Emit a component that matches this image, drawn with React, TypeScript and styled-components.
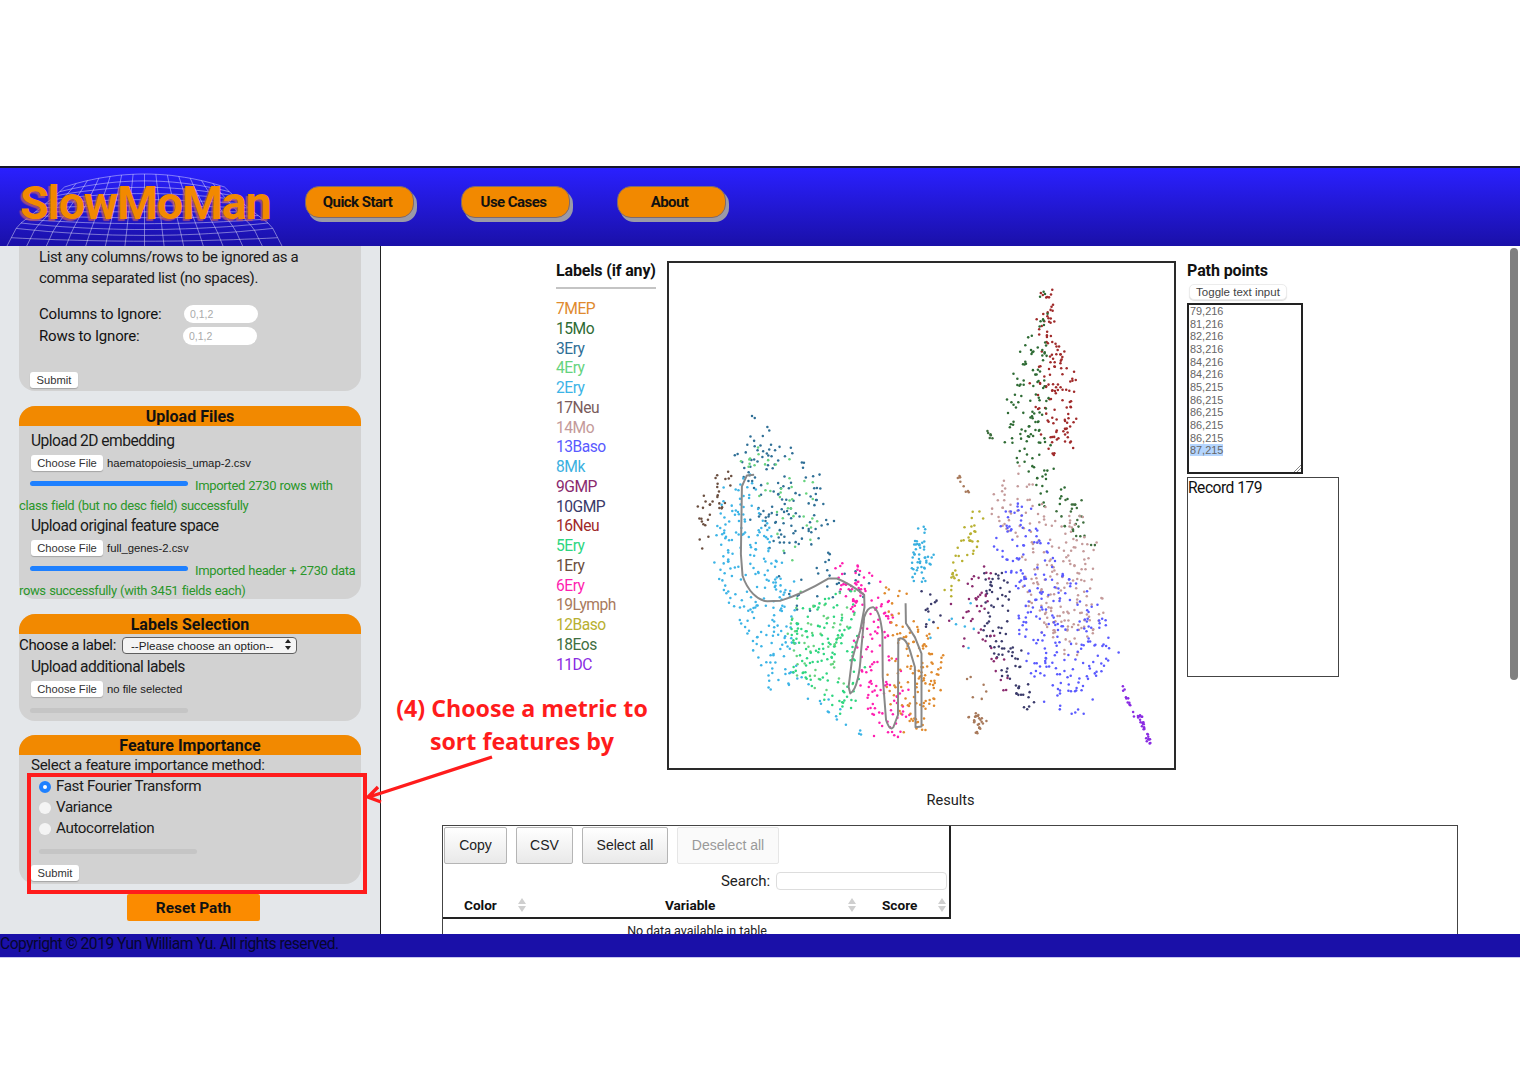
import React from "react";
import styled, { createGlobalStyle } from "styled-components";

const Global = createGlobalStyle`
  html, body { margin: 0; padding: 0; background: #fff; }
  body { font-family: Roboto, "Liberation Sans", sans-serif; color: #111; }
  * { box-sizing: border-box; }
`;

const UI = `"Liberation Sans", Arial, sans-serif`;

const Page = styled.div`
  position: relative;
  width: 1520px;
  height: 1080px;
  padding-top: 166px;
  overflow: hidden;
`;
const Frame = styled.div`
  display: flex;
  flex-direction: column;
  height: 792px;
`;
const Header = styled.header`
  flex: none;
  height: 80px;
  border-top: 2px solid #16162a;
  background: linear-gradient(#2a20ff, #1a10a8);
  display: flex;
  align-items: flex-start;
  padding: 18px 0 0 305px;
  gap: 47px;
  position: relative;
`;
const LogoGrid = styled.svg`
  position: absolute;
  left: 0;
  top: 0;
`;
const LogoText = styled.div`
  position: absolute;
  left: 20px;
  top: 7px;
  font: 700 47px/56px Roboto, sans-serif;
  letter-spacing: -1.35px;
  color: #f28900;
  text-shadow: -2px 2px 1px rgba(190, 90, 110, 0.75);
`;
const NavButton = styled.a`
  display: block;
  width: 109px;
  height: 32px;
  padding-right: 4px;
  border-radius: 14px;
  background: #f28900;
  border: 1px solid #7d6a70;
  box-shadow: 3px 4px 0 #9a9aa8;
  font: 700 15px/31px Roboto, sans-serif;
  letter-spacing: -0.55px;
  color: #111;
  text-align: center;
`;
const Body = styled.div`
  flex: 1;
  display: flex;
  min-height: 0;
`;
const Sidebar = styled.aside`
  flex: none;
  width: 381px;
  background: #e4e7ea;
  border-right: 1px solid #222;
  padding-left: 19px;
  overflow: hidden;
`;
const Card = styled.section<{ $h: number; $flat?: boolean; $mb?: number }>`
  width: 342px;
  height: ${(p) => p.$h}px;
  margin-bottom: ${(p) => p.$mb ?? 15}px;
  background: #d2d2d2;
  border-radius: ${(p) => (p.$flat ? "0 0 16px 16px" : "16px")};
`;
const CardHead = styled.h2`
  margin: 0;
  height: 20px;
  background: #f28900;
  border-radius: 16px 16px 0 0;
  font: 700 16px/21px Roboto, sans-serif;
  text-align: center;
  color: #111;
`;
const Para = styled.p`
  margin: 0;
  padding: 1px 0 0 20px;
  font-size: 15px;
  letter-spacing: -0.37px;
  line-height: 21px;
  color: #1a1a1a;
`;
const IgnoreRows = styled.div`
  margin-top: 14px;
  padding-left: 20px;
`;
const IgnoreRow = styled.div`
  display: flex;
  align-items: center;
  height: 22px;
  font-size: 15px;
  letter-spacing: -0.2px;
`;
const IgnoreLabel = styled.label<{ $w: number }>`
  width: ${(p) => p.$w}px;
`;
const Pill = styled.input`
  width: 74px;
  height: 18px;
  border: none;
  border-radius: 9px;
  background: #fff;
  padding: 0 6px;
  font: 10.5px ${UI};
  &::placeholder { color: #aaa; }
`;
const PlainButton = styled.button<{ $w: number; $mt?: number; $ml?: number }>`
  display: block;
  flex: none;
  width: ${(p) => p.$w}px;
  height: 16px;
  margin: ${(p) => p.$mt ?? 0}px 0 0 ${(p) => p.$ml ?? 0}px;
  padding: 0;
  border: none;
  border-radius: 3px;
  background: #fff;
  box-shadow: 0 1px 1px #a5a5a5;
  font: 11.2px/16px ${UI};
  color: #333;
`;
const FileHeading = styled.div<{ $pt?: number }>`
  padding: ${(p) => p.$pt ?? 0}px 0 4px 12px;
  font-size: 15.6px;
  letter-spacing: -0.52px;
  line-height: 20px;
  color: #1a1a1a;
`;
const FileRow = styled.div`
  display: flex;
  align-items: center;
  gap: 4px;
  padding-left: 12px;
  height: 16px;
  font: 11.3px ${UI};
  color: #1a1a1a;
`;
const Status = styled.p`
  margin: 5px 0 0;
  font-size: 13px;
  letter-spacing: -0.37px;
  word-spacing: 0.6px;
  line-height: 20px;
  color: #2a962a;
  white-space: nowrap;
`;
const Bar = styled.span<{ $done?: boolean; $ml: number; $block?: boolean }>`
  display: ${(p) => (p.$block ? "block" : "inline-block")};
  width: 158px;
  height: 5px;
  margin-left: ${(p) => p.$ml}px;
  margin-right: 7px;
  margin-top: ${(p) => (p.$block ? 11 : 0)}px;
  vertical-align: 4px;
  border-radius: 3px;
  background: ${(p) => (p.$done ? "#1e80ff" : "#c5c5c5")};
`;
const ChooseRow = styled.div`
  display: flex;
  align-items: center;
  height: 23px;
  padding-bottom: 2px;
  font-size: 15px;
  letter-spacing: -0.33px;
  gap: 6px;
`;
const SelectWrap = styled.div`
  position: relative;
  width: 175px;
  height: 17px;
`;
const Select = styled.select`
  appearance: none;
  width: 100%;
  height: 100%;
  padding: 0 0 0 8px;
  border: 1px solid #5f5f5f;
  border-radius: 4px;
  background: #f4f4f4;
  font: 11.6px ${UI};
  letter-spacing: 0;
  color: #222;
`;
const SelectArrows = styled.svg`
  position: absolute;
  right: 6px;
  top: 3px;
`;
const MethodLabel = styled.div`
  padding-left: 12px;
  font-size: 15.2px;
  letter-spacing: -0.35px;
  line-height: 20px;
  color: #1a1a1a;
`;
const RadioRow = styled.label`
  display: flex;
  align-items: center;
  gap: 5px;
  height: 21px;
  padding-left: 20px;
  font-size: 15.2px;
  letter-spacing: -0.4px;
  color: #1a1a1a;
`;
const RadioDot = styled.span<{ $on?: boolean }>`
  flex: none;
  width: 12px;
  height: 12px;
  margin-top: 3px;
  border-radius: 50%;
  background: ${(p) => (p.$on ? "#fff" : "#f4f4f4")};
  border: ${(p) => (p.$on ? "4px solid #1e80ff" : "none")};
`;
const ResetButton = styled.button`
  display: block;
  width: 133px;
  height: 27px;
  margin: -5px 0 0 108px;
  border: none;
  border-radius: 2px;
  background: #fb8b00;
  font: 700 15.4px/27px Roboto, sans-serif;
  color: #111;
`;
const Main = styled.main`
  flex: 1;
  position: relative;
  overflow: hidden;
  min-width: 0;
`;
const TopRow = styled.div`
  display: flex;
  align-items: flex-start;
  gap: 11px;
  padding: 15px 0 0 175px;
`;
const LabelsCol = styled.div`
  width: 100px;
  flex: none;
`;
const LabelsTitle = styled.h3`
  margin: 0;
  height: 28px;
  border-bottom: 2px solid #c4c4c4;
  font: 700 16px/20px Roboto, sans-serif;
  letter-spacing: -0.15px;
  white-space: nowrap;
  color: #111;
`;
const LabelList = styled.ul`
  list-style: none;
  margin: 10px 0 0;
  padding: 0;
`;
const LabelItem = styled.li<{ $c: string }>`
  height: 19.78px;
  font-size: 15.6px;
  letter-spacing: -0.5px;
  line-height: 20px;
  color: ${(p) => p.$c};
`;
const Plot = styled.div`
  flex: none;
  width: 509px;
  height: 509px;
  border: 2px solid #2a2a2a;
  background: #fff;
`;
const PathCol = styled.div`
  width: 155px;
  flex: none;
`;
const PathTitle = styled.h3`
  margin: 0;
  height: 23px;
  font: 700 16px/20px Roboto, sans-serif;
  letter-spacing: -0.1px;
  color: #111;
`;
const ToggleButton = styled.button`
  display: block;
  width: 98px;
  height: 16px;
  margin: 0 0 3px 2px;
  padding: 0;
  border: 1px solid #ececec;
  border-radius: 5px;
  background: #fff;
  box-shadow: 0 1px 1px #ddd;
  font: 11.5px/14px ${UI};
  color: #444;
`;
const PointsBox = styled.div`
  position: relative;
  width: 116px;
  height: 171px;
  border: 2px solid #222;
  padding: 0 1px;
  font: 10.9px/12.67px ${UI};
  color: #666;
`;
const Point = styled.div``;
const Picked = styled.span`
  background: #b4d5fe;
`;
const Grip = styled.svg`
  position: absolute;
  right: 0;
  bottom: 0;
`;
const RecordBox = styled.div`
  width: 152px;
  height: 200px;
  margin-top: 3px;
  border: 1px solid #444;
  font-size: 15.6px;
  letter-spacing: -0.5px;
  line-height: 21px;
`;
const Results = styled.div`
  margin-top: 20px;
  text-align: center;
  font-size: 14.6px;
  line-height: 20px;
  color: #222;
`;
const TableOuter = styled.div`
  width: 1016px;
  height: 120px;
  margin: 15px 0 0 61px;
  border: 1px solid #444;
`;
const TableInner = styled.div`
  position: relative;
  width: 508px;
`;
const TablePanel = styled.div`
  height: 93px;
  border-right: 2px solid #222;
  border-bottom: 2px solid #222;
`;
const Toolbar = styled.div`
  display: flex;
  padding: 1px 0 0 1px;
  height: 43px;
`;
const DtButton = styled.button<{ $w: number; $ml: number; $off?: boolean }>`
  width: ${(p) => p.$w}px;
  height: 37px;
  margin-left: ${(p) => p.$ml}px;
  padding: 0 0 1px;
  border: 1px solid ${(p) => (p.$off ? "#e6e6e6" : "#b5b5b5")};
  border-radius: 2px;
  background: ${(p) => (p.$off ? "#fafafa" : "linear-gradient(#fff,#e9e9e9)")};
  font: 14px ${UI};
  color: ${(p) => (p.$off ? "#999" : "#222")};
`;
const SearchRow = styled.div`
  display: flex;
  justify-content: flex-end;
  align-items: center;
  gap: 6px;
  height: 24px;
  padding: 0 2px 0 0;
  font-size: 15px;
  letter-spacing: -0.1px;
  color: #222;
`;
const SearchInput = styled.input`
  width: 171px;
  height: 18px;
  border: 1px solid #ddd;
  border-radius: 4px;
  background: #fff;
`;
const HeadRow = styled.div`
  display: flex;
  align-items: center;
  height: 23px;
`;
const HeadCell = styled.div<{ $w: number; $pl: number }>`
  position: relative;
  width: ${(p) => p.$w}px;
  padding-left: ${(p) => p.$pl}px;
  font-size: 13.6px;
  font-weight: 700;
  color: #111;
`;
const SortIcon = styled.svg<{ $r: number }>`
  position: absolute;
  right: ${(p) => p.$r}px;
  top: 0;
`;
const Empty = styled.div`
  width: 508px;
  text-align: center;
  font-size: 12.5px;
  line-height: 24px;
  color: #222;
`;
const Footer = styled.footer`
  flex: none;
  height: 24px;
  background: #1a10a8;
  border-bottom: 1px solid #c8c8ee;
  font-size: 15.6px;
  letter-spacing: -0.5px;
  line-height: 21px;
  color: #06062e;
  white-space: nowrap;
`;
const ScrollThumb = styled.div`
  position: absolute;
  top: 2px;
  right: 2px;
  width: 8px;
  height: 432px;
  border-radius: 4px;
  background: #808080;
`;
const RedBox = styled.div`
  position: absolute;
  left: 27px;
  top: 773px;
  width: 340px;
  height: 121px;
  border: 4px solid #ff1c1c;
  pointer-events: none;
`;
const Arrow = styled.svg`
  position: absolute;
  left: 360px;
  top: 750px;
`;
const Note = styled.div`
  position: absolute;
  left: 382px;
  top: 692px;
  width: 280px;
  text-align: center;
  font: 700 23.2px/33px "Open Sans", sans-serif;
  color: #ff1c1c;
`;

type Cluster = { c: string; n: number; poly: number[][] };
const COL: Record<string, string> = {
  "7MEP": "#e08a2e", "15Mo": "#2e6b34", "3Ery": "#2f6f96", "4Ery": "#66d37e", "2Ery": "#3cb4e6",
  "17Neu": "#7a5c5c", "14Mo": "#c49a9a", "13Baso": "#5a5aff", "8Mk": "#3ab0e0", "9GMP": "#8a2a6e",
  "10GMP": "#3a3a6a", "16Neu": "#a02a2a", "5Ery": "#2ed680", "1Ery": "#6b4f40", "6Ery": "#ff1fb0",
  "19Lymph": "#a87a5c", "12Baso": "#b8b030", "18Eos": "#3f6f3f", "11DC": "#8a2be2",
};
const CL: Cluster[] = [
  { c: COL["16Neu"], n: 10, poly: [[1150, 100], [1185, 85], [1195, 205], [1150, 205]] },
  { c: COL["16Neu"], n: 125, poly: [[1175, 90], [1190, 200], [1250, 350], [1255, 530], [1240, 590], [1160, 600], [1120, 400], [1140, 200], [1150, 110]] },
  { c: COL["15Mo"], n: 120, poly: [[1135, 120], [1160, 100], [1170, 300], [1170, 600], [1210, 640], [1130, 700], [1070, 600], [1040, 540], [1045, 380], [1090, 250]] },
  { c: COL["15Mo"], n: 12, poly: [[1100, 660], [1250, 700], [1270, 760], [1130, 760]] },
  { c: COL["18Eos"], n: 26, poly: [[1190, 750], [1275, 745], [1310, 900], [1240, 880]] },
  { c: COL["18Eos"], n: 6, poly: [[980, 528], [988, 525], [1000, 550], [992, 555]] },
  { c: COL["14Mo"], n: 215, poly: [[1030, 620], [1100, 640], [1160, 760], [1290, 790], [1340, 990], [1350, 1080], [1240, 1240], [1130, 1110], [1060, 880], [1000, 770]] },
  { c: COL["13Baso"], n: 245, poly: [[1000, 880], [1040, 750], [1100, 760], [1180, 900], [1340, 1080], [1365, 1200], [1300, 1310], [1280, 1390], [1230, 1400], [1130, 1320], [1090, 1200], [1060, 1000]] },
  { c: COL["10GMP"], n: 85, poly: [[965, 950], [1045, 950], [1060, 1150], [1120, 1340], [1090, 1390], [1030, 1290], [950, 1100]] },
  { c: COL["9GMP"], n: 42, poly: [[920, 930], [990, 930], [1000, 1150], [1060, 1290], [1040, 1390], [990, 1200], [925, 1070]] },
  { c: COL["12Baso"], n: 40, poly: [[945, 745], [965, 770], [955, 885], [905, 950], [870, 1060], [860, 1000], [880, 920], [920, 830]] },
  { c: COL["19Lymph"], n: 9, poly: [[888, 660], [900, 660], [930, 715], [915, 720]] },
  { c: COL["19Lymph"], n: 26, poly: [[960, 1370], [985, 1405], [945, 1450], [925, 1390]] },
  { c: COL["19Lymph"], n: 6, poly: [[880, 1250], [1000, 1250], [1000, 1350], [880, 1350]] },
  { c: COL["11DC"], n: 12, poly: [[1385, 1295], [1395, 1295], [1440, 1390], [1425, 1395]] },
  { c: COL["11DC"], n: 26, poly: [[1435, 1385], [1448, 1385], [1478, 1470], [1468, 1472]] },
  { c: COL["1Ery"], n: 34, poly: [[95, 795], [175, 635], [225, 665], [160, 850], [130, 905]] },
  { c: COL["3Ery"], n: 130, poly: [[270, 480], [305, 445], [340, 520], [470, 650], [525, 800], [500, 860], [380, 900], [320, 880], [280, 790], [230, 590]] },
  { c: COL["3Ery"], n: 30, poly: [[500, 895], [650, 960], [620, 1040], [400, 1080], [350, 950]] },
  { c: COL["2Ery"], n: 225, poly: [[140, 880], [190, 700], [270, 640], [330, 800], [360, 950], [420, 1000], [400, 1300], [340, 1310], [300, 1240], [200, 1040]] },
  { c: COL["4Ery"], n: 42, poly: [[210, 575], [380, 580], [480, 730], [460, 900], [350, 900], [340, 800]] },
  { c: COL["4Ery"], n: 55, poly: [[380, 1000], [600, 1000], [600, 1300], [440, 1340], [380, 1150]] },
  { c: COL["5Ery"], n: 125, poly: [[385, 1070], [590, 1010], [600, 1320], [570, 1400], [400, 1270]] },
  { c: COL["2Ery"], n: 16, poly: [[400, 1250], [600, 1420], [640, 1470], [590, 1450], [430, 1340]] },
  { c: COL["6Ery"], n: 150, poly: [[510, 930], [640, 930], [700, 1100], [745, 1400], [725, 1470], [640, 1472], [600, 1300], [590, 1100]] },
  { c: COL["7MEP"], n: 125, poly: [[700, 1100], [830, 1130], [860, 1270], [800, 1430], [720, 1450], [685, 1300]] },
  { c: COL["7MEP"], n: 10, poly: [[660, 980], [750, 980], [720, 1100], [660, 1060]] },
  { c: COL["8Mk"], n: 50, poly: [[785, 795], [800, 795], [822, 900], [800, 1000], [745, 980], [750, 890]] },
  { c: COL["10GMP"], n: 12, poly: [[780, 880], [830, 1010], [850, 1130], [790, 1120]] },
  { c: COL["2Ery"], n: 8, poly: [[780, 1040], [960, 1040], [940, 1200], [800, 1160]] },
  { c: COL["9GMP"], n: 6, poly: [[850, 1050], [950, 1050], [950, 1200], [860, 1160]] },
];

function inPoly(x: number, y: number, p: number[][]) {
  let hit = false;
  for (let i = 0, j = p.length - 1; i < p.length; j = i++) {
    const a = p[i], b = p[j];
    if (a[1] > y !== b[1] > y && x < ((b[0] - a[0]) * (y - a[1])) / (b[1] - a[1]) + a[0]) hit = !hit;
  }
  return hit;
}

function buildDots() {
  let s = 12345;
  const rnd = () => {
    s = (s * 1664525 + 1013904223) >>> 0;
    return s / 4294967296;
  };
  const jitter = (k: number) => (rnd() + rnd() + rnd() - 1.5) * k;
  const out: { x: number; y: number; c: string }[] = [];
  for (const cl of CL) {
    const xs = cl.poly.map((q) => q[0]), ys = cl.poly.map((q) => q[1]);
    const x0 = Math.min(...xs), x1 = Math.max(...xs), y0 = Math.min(...ys), y1 = Math.max(...ys);
    const k = cl.n > 20 && x1 - x0 > 100 ? 16 : 3;
    let placed = 0, guard = 0;
    while (placed < cl.n && guard < 20000) {
      guard++;
      const x = x0 + rnd() * (x1 - x0), y = y0 + rnd() * (y1 - y0);
      if (inPoly(x, y, cl.poly)) {
        out.push({ x: x + jitter(k), y: y + jitter(k), c: cl.c });
        placed++;
      }
    }
  }
  return out;
}
const DOTS = buildDots();
const PATH =
  "M280 660 L258 662 L243 695 L240 900 L245 965 C260 1010 290 1040 320 1042 L360 1040 C410 1025 460 1000 505 973 L530 973 C560 985 590 1005 612 1022 L613 1060 L600 1130 L575 1220 L565 1300 L570 1320 C590 1310 600 1250 602 1200 L612 1090 Q622 1058 640 1060 Q660 1070 667 1140 L668 1270 L678 1400 Q690 1435 700 1422 L714 1385 L715 1155 Q735 1145 750 1190 L765 1240 L767 1422 L785 1420 L785 1200 L765 1150 L738 1108 L737 1048";

function gridPaths() {
  const h: string[] = [];
  const pos = (u: number, v: number) => {
    const cx = 144.5;
    const x = cx + u * (80 + 58 * v);
    const base = 6 + 73 * Math.pow(v, 0.95);
    const c = v < 0.8 ? 13 * (1 - v / 0.5) : -8.4 * (1 - v) * 5;
    return [x, base + c * u * u];
  };
  const rows = 12, cols = 14;
  for (let r = 0; r <= rows; r++) {
    let d = "";
    for (let i = 0; i <= 24; i++) {
      const [x, y] = pos(-1 + i / 12, r / rows);
      d += `${i ? "L" : "M"}${x.toFixed(1)} ${y.toFixed(1)} `;
    }
    h.push(d);
  }
  for (let k = 0; k <= cols; k++) {
    let d = "";
    for (let i = 0; i <= 12; i++) {
      const [x, y] = pos(-1 + (2 * k) / cols, i / 12);
      d += `${i ? "L" : "M"}${x.toFixed(1)} ${y.toFixed(1)} `;
    }
    h.push(d);
  }
  return h;
}
const GRID = gridPaths();

const LABELS = ["7MEP","15Mo","3Ery","4Ery","2Ery","17Neu","14Mo","13Baso","8Mk","9GMP","10GMP","16Neu","5Ery","1Ery","6Ery","19Lymph","12Baso","18Eos","11DC"];
const POINTS = ["79,216","81,216","82,216","83,216","84,216","84,216","85,215","86,215","86,215","86,215","86,215"];

const Sort = ({ r }: { r: number }) => (
  <SortIcon $r={r} width="8" height="16" viewBox="0 0 8 16">
    <path d="M4 1 L8 7 H0Z M4 15 L8 9 H0Z" fill="#cfcfcf" />
  </SortIcon>
);

export default function App() {
  return (
    <Page>
      <Global />
      <Frame>
        <Header>
          <LogoGrid width="290" height="78" viewBox="0 0 290 78">
            {GRID.map((d, i) => (
              <path key={i} d={d} fill="none" stroke="#fff" strokeOpacity="0.42" strokeWidth="1" />
            ))}
          </LogoGrid>
          <LogoText>SlowMoMan</LogoText>
          <NavButton>Quick Start</NavButton>
          <NavButton>Use Cases</NavButton>
          <NavButton>About</NavButton>
        </Header>
        <Body>
          <Sidebar>
            <Card $h={145} $flat>
              <Para>
                List any columns/rows to be ignored as a
                <br />
                comma separated list (no spaces).
              </Para>
              <IgnoreRows>
                <IgnoreRow>
                  <IgnoreLabel $w={145}>Columns to Ignore:</IgnoreLabel>
                  <Pill placeholder="0,1,2" />
                </IgnoreRow>
                <IgnoreRow>
                  <IgnoreLabel $w={144}>Rows to Ignore:</IgnoreLabel>
                  <Pill placeholder="0,1,2" />
                </IgnoreRow>
              </IgnoreRows>
              <PlainButton $w={48} $mt={25} $ml={11}>Submit</PlainButton>
            </Card>
            <Card $h={193}>
              <CardHead>Upload Files</CardHead>
              <FileHeading $pt={5}>Upload 2D embedding</FileHeading>
              <FileRow>
                <PlainButton $w={72}>Choose File</PlainButton>
                haematopoiesis_umap-2.csv
              </FileRow>
              <Status>
                <Bar $done $ml={11} />
                Imported 2730 rows with
                <br />
                class field (but no desc field) successfully
              </Status>
              <FileHeading>Upload original feature space</FileHeading>
              <FileRow>
                <PlainButton $w={72}>Choose File</PlainButton>
                full_genes-2.csv
              </FileRow>
              <Status>
                <Bar $done $ml={11} />
                Imported header + 2730 data
                <br />
                rows successfully (with 3451 fields each)
              </Status>
            </Card>
            <Card $h={107} $mb={14}>
              <CardHead>Labels Selection</CardHead>
              <ChooseRow>
                Choose a label:
                <SelectWrap>
                  <Select defaultValue="">
                    <option value="">--Please choose an option--</option>
                  </Select>
                  <SelectArrows width="6" height="11" viewBox="0 0 6 11">
                    <path d="M3 0 L6 4 H0Z M3 11 L6 7 H0Z" fill="#222" />
                  </SelectArrows>
                </SelectWrap>
              </ChooseRow>
              <FileHeading>Upload additional labels</FileHeading>
              <FileRow>
                <PlainButton $w={72}>Choose File</PlainButton>
                no file selected
              </FileRow>
              <Bar $block $ml={11} />
            </Card>
            <Card $h={149}>
              <CardHead>Feature Importance</CardHead>
              <MethodLabel>Select a feature importance method:</MethodLabel>
              <RadioRow><RadioDot $on />Fast Fourier Transform</RadioRow>
              <RadioRow><RadioDot />Variance</RadioRow>
              <RadioRow><RadioDot />Autocorrelation</RadioRow>
              <Bar $block $ml={20} />
              <PlainButton $w={48} $mt={11} $ml={12}>Submit</PlainButton>
            </Card>
            <ResetButton>Reset Path</ResetButton>
          </Sidebar>
          <Main>
            <TopRow>
              <LabelsCol>
                <LabelsTitle>Labels (if any)</LabelsTitle>
                <LabelList>
                  {LABELS.map((l) => (
                    <LabelItem key={l} $c={COL[l]}>{l}</LabelItem>
                  ))}
                </LabelList>
              </LabelsCol>
              <Plot>
                <svg width="505" height="505" viewBox="23 21 1524 1524">
                  {DOTS.map((d, i) => (
                    <circle key={i} cx={d.x} cy={d.y} r="3.8" fill={d.c} />
                  ))}
                  <path d={PATH} fill="none" stroke="#888" strokeWidth="6" strokeLinejoin="round" />
                </svg>
              </Plot>
              <PathCol>
                <PathTitle>Path points</PathTitle>
                <ToggleButton>Toggle text input</ToggleButton>
                <PointsBox>
                  {POINTS.map((p, i) => (
                    <Point key={i}>{p}</Point>
                  ))}
                  <Point><Picked>87,215</Picked></Point>
                  <Grip width="8" height="8" viewBox="0 0 8 8">
                    <path d="M1 8 L8 1 M4 8 L8 4" stroke="#888" strokeWidth="1" />
                  </Grip>
                </PointsBox>
                <RecordBox>Record 179</RecordBox>
              </PathCol>
            </TopRow>
            <Results>Results</Results>
            <TableOuter>
              <TableInner>
                <TablePanel>
                  <Toolbar>
                    <DtButton $w={63} $ml={0}>Copy</DtButton>
                    <DtButton $w={57} $ml={9}>CSV</DtButton>
                    <DtButton $w={86} $ml={9}>Select all</DtButton>
                    <DtButton $w={102} $ml={9} $off>Deselect all</DtButton>
                  </Toolbar>
                  <SearchRow>
                    Search:
                    <SearchInput />
                  </SearchRow>
                  <HeadRow>
                    <HeadCell $w={87} $pl={21}>Color<Sort r={4} /></HeadCell>
                    <HeadCell $w={330} $pl={135}>Variable<Sort r={4} /></HeadCell>
                    <HeadCell $w={89} $pl={22}>Score<Sort r={3} /></HeadCell>
                  </HeadRow>
                </TablePanel>
                <Empty>No data available in table</Empty>
              </TableInner>
            </TableOuter>
            <ScrollThumb />
          </Main>
        </Body>
        <Footer>Copyright © 2019 Yun William Yu. All rights reserved.</Footer>
      </Frame>
      <RedBox />
      <Arrow width="140" height="60" viewBox="0 0 140 60">
        <path d="M132 7 L9 47 M18 37 L8 47 L21 52" fill="none" stroke="#ff1c1c" strokeWidth="3.4" />
      </Arrow>
      <Note>
        (4) Choose a metric to
        <br />
        sort features by
      </Note>
    </Page>
  );
}
